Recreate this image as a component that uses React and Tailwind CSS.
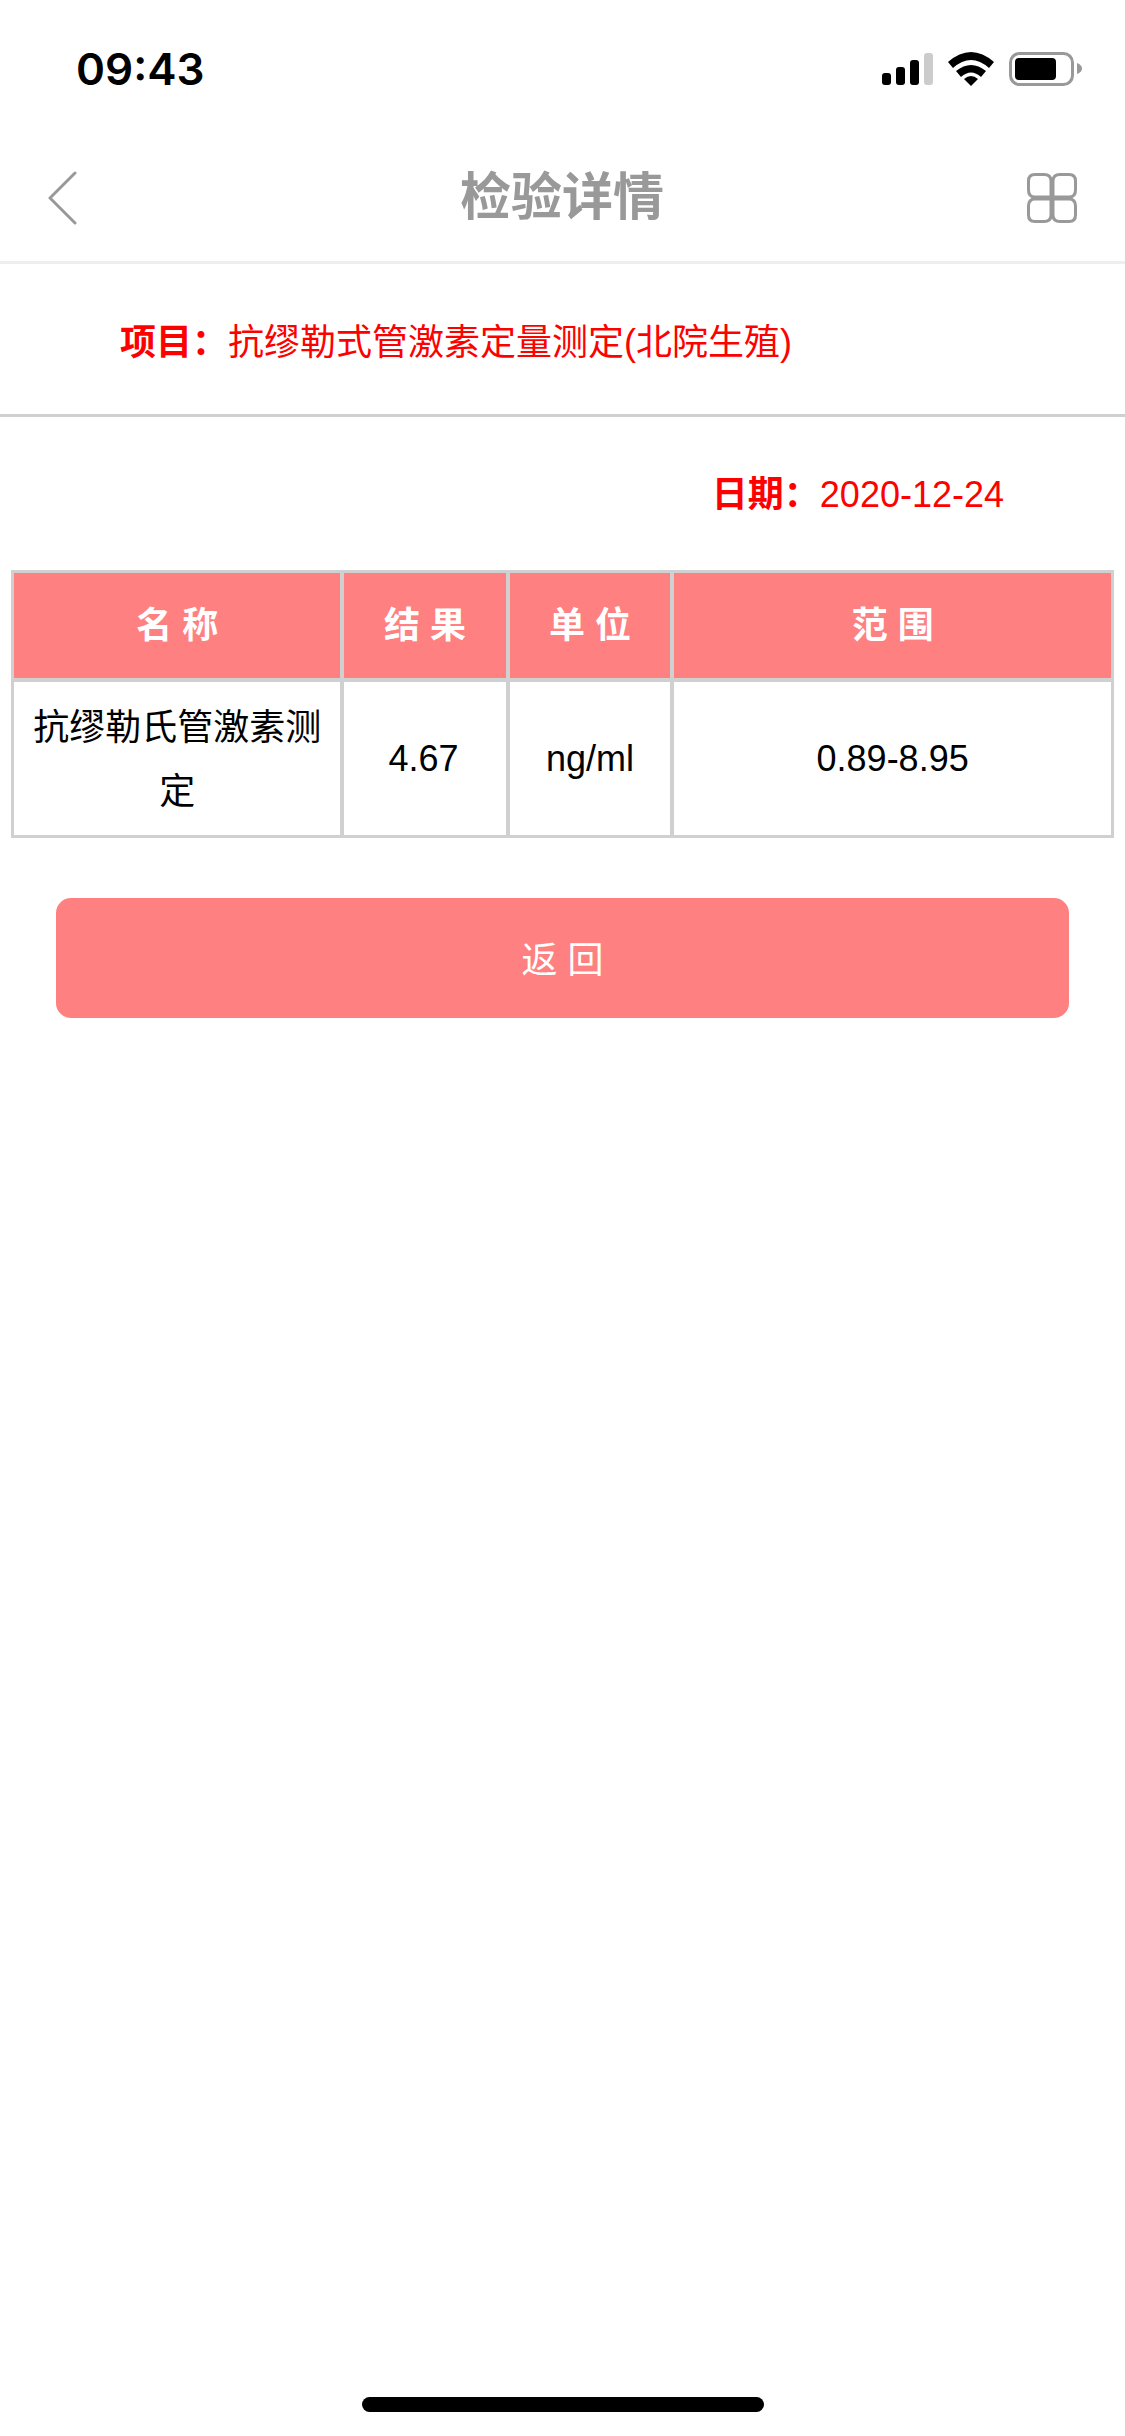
const StatusIcons = () => (
  <svg width="200" height="34" viewBox="882 52 200 34" className="block">
    <rect x="882" y="73" width="9" height="12" rx="3" fill="#000" />
    <rect x="896" y="67" width="9" height="18" rx="3" fill="#000" />
    <rect x="910" y="60" width="9" height="25" rx="3" fill="#000" />
    <rect x="924" y="53" width="9" height="32" rx="3" fill="#ccc" />
    <path d="M948 62 Q971 42 994 62 L989 68 Q971 52 953 68 Z" fill="#000" />
    <path d="M956 71 Q971 59 986 71 L981 77 Q971 68 961 77 Z" fill="#000" />
    <path d="M964 79 Q971 73 978 79 L971 86 Z" fill="#000" />
    <rect x="1010.5" y="53.5" width="62" height="31" rx="9" fill="none" stroke="#999" strokeWidth="3" />
    <rect x="1015" y="58" width="41" height="22" rx="4" fill="#000" />
    <path d="M1077 63 Q1082 65 1082 68.5 Q1082 72 1077 74 Z" fill="#999" />
  </svg>
)

const GridIcon = () => (
  <svg width="50" height="50" viewBox="0 0 50 50" fill="none" stroke="#999" strokeWidth="3" className="block">
    <path d="M8 1.5 H17 Q24 1.5 24 8 V24 H8 Q1.5 24 1.5 17 V8 Q1.5 1.5 8 1.5 Z" />
    <path d="M33 1.5 H42 Q48.5 1.5 48.5 8 V17 Q48.5 24 42 24 H26 V8 Q26 1.5 33 1.5 Z" />
    <path d="M8 26 H24 V42 Q24 48.5 17 48.5 H8 Q1.5 48.5 1.5 42 V33 Q1.5 26 8 26 Z" />
    <path d="M26 26 H42 Q48.5 26 48.5 33 V42 Q48.5 48.5 42 48.5 H33 Q26 48.5 26 42 Z" />
  </svg>
)

const headers = ['名 称', '结 果', '单 位', '范 围']

export default function App() {
  return (
    <div className="w-[1125px] h-[2436px] flex flex-col bg-white font-['Liberation_Sans','Noto_Sans_CJK_SC',sans-serif]">
      {/* status bar */}
      <div className="h-[88px] pt-[52px] pl-[76px] pr-[43px] flex items-start justify-between">
        <span className="font-['Inter',sans-serif] text-[44px] leading-[34px] font-semibold text-black">09:43</span>
        <StatusIcons />
      </div>

      {/* nav */}
      <div className="h-[176px] flex items-center justify-between pl-[47px] pr-[48px] pt-[46px] border-b-[3px] border-[#eeeeee]">
        <div className="w-[50px]">
          <svg width="30" height="54" viewBox="0 0 30 54" fill="none" stroke="#999" strokeWidth="3" strokeLinecap="round" strokeLinejoin="round" className="block">
            <path d="M28 2 L3 27 L28 52" />
          </svg>
        </div>
        <h1 className="text-[51px] leading-[60px] font-bold text-[#999999]">检验详情</h1>
        <GridIcon />
      </div>

      {/* project */}
      <div className="h-[153px] flex items-center pl-[120px] pt-[8px] border-b-[3px] border-[#d0d0d0] text-[36px] text-[#ff0000]">
        <span className="font-bold">项目：</span>
        <span>抗缪勒式管激素定量测定(北院生殖)</span>
      </div>

      {/* date */}
      <div className="h-[153px] flex items-center justify-end pr-[121px] pt-[2px] text-[36px] text-[#ff0000]">
        <span className="font-bold">日期：</span>
        <span>2020-12-24</span>
      </div>

      <div className="px-[11px]">
        <table className="w-[1103px] table-fixed border-collapse border-[3px] border-[#d0d0d0] text-[36px]">
          <colgroup>
            <col className="w-[329px]" />
            <col className="w-[165px]" />
            <col className="w-[164px]" />
            <col className="w-[439px]" />
          </colgroup>
          <thead>
            <tr className="h-[108px]">
              {headers.map((h) => (
                <th key={h} className="border-[3px] border-x-[4px] border-b-[4px] first:border-l-[3px] last:border-r-[3px] border-[#d0d0d0] bg-[#ff8080] text-white font-bold pt-[2px] px-0 pb-0">
                  {h}
                </th>
              ))}
            </tr>
          </thead>
          <tbody>
            <tr className="h-[157px] text-black text-center">
              <td className="border-[3px] border-x-[4px] border-l-[3px] border-[#d0d0d0] px-[18px] pt-[3px] leading-[64px]">抗缪勒氏管激素测定</td>
              <td className="border-[3px] border-x-[4px] border-[#d0d0d0] pt-[2px] pr-[3px]">4.67</td>
              <td className="border-[3px] border-x-[4px] border-[#d0d0d0] pt-[2px]">ng/ml</td>
              <td className="border-[3px] border-l-[4px] border-[#d0d0d0] pt-[2px]">0.89-8.95</td>
            </tr>
          </tbody>
        </table>
      </div>

      <div className="px-[56px] mt-[60px]">
        <button className="w-full h-[120px] pt-[6px] rounded-[15px] bg-[#ff8080] text-white text-[36px]">返 回</button>
      </div>

      {/* home indicator */}
      <div className="mt-auto pb-[24px] flex justify-center">
        <div className="w-[402px] h-[15px] rounded-full bg-black"></div>
      </div>
    </div>
  )
}
